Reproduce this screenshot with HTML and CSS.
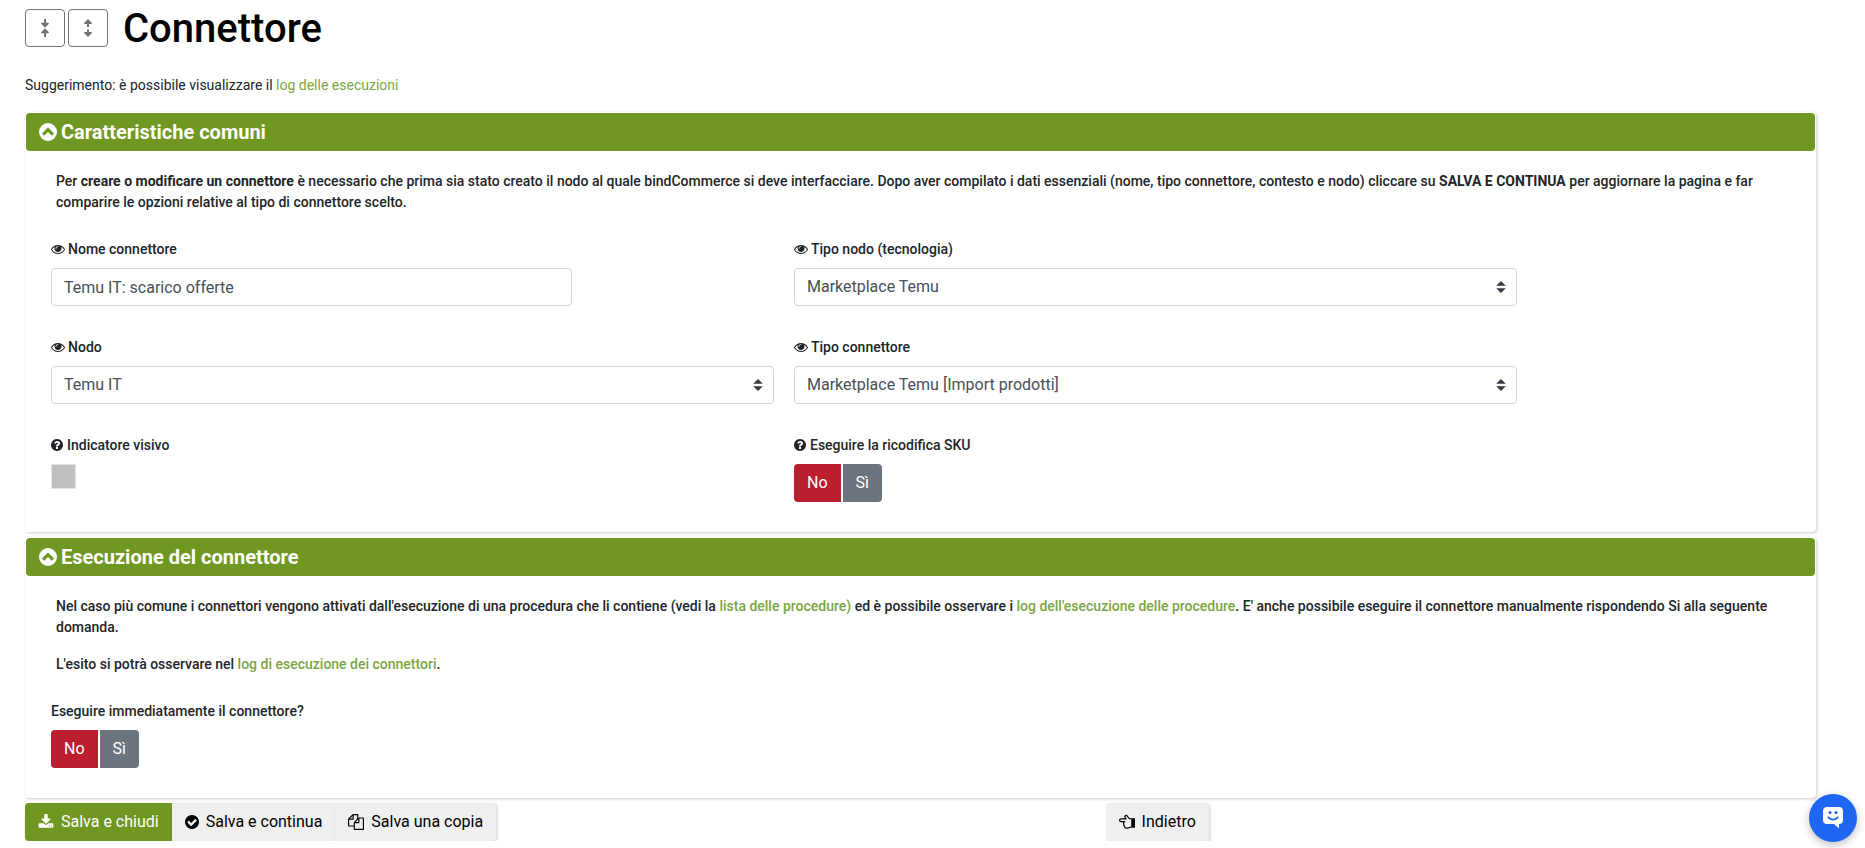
FILE: index.html
```html
<!DOCTYPE html>
<html lang="it">
<head>
  <meta charset="UTF-8">
  <meta name="viewport" content="width=device-width, initial-scale=1.0">
  <title>Connettore</title>
  <link rel="stylesheet" href="styles.css">
</head>
<body>

  <!-- Icone riutilizzate nella pagina -->
  <svg class="sprite" aria-hidden="true">
    <symbol id="eye" viewBox="0 0 1792 1792"><path d="M1664 960q-152-236-381-353 61 104 61 225 0 185-131.5 316.5t-316.5 131.5-316.5-131.5-131.5-316.5q0-121 61-225-229 117-381 353 133 205 333.5 326.5t434.5 121.5 434.5-121.5 333.5-326.5zm-720-384q0-20-14-34t-34-14q-125 0-214.5 89.5t-89.5 214.5q0 20 14 34t34 14 34-14 14-34q0-86 61-147t147-61q20 0 34-14t14-34zm848 384q0 34-20 69-140 230-376.5 368.5t-499.5 138.5-499.5-139-376.5-368q-20-35-20-69t20-69q140-229 376.5-368t499.5-139 499.5 139 376.5 368q20 35 20 69z"/></symbol>
    <symbol id="question" viewBox="128 128 1536 1536"><path d="M1024 1376v-192q0-14-9-23t-23-9h-192q-14 0-23 9t-9 23v192q0 14 9 23t23 9h192q14 0 23-9t9-23zm256-672q0-88-55.5-163t-138.5-116-170-41q-243 0-371 213-15 24 8 42l132 100q7 6 19 6 16 0 25-12 53-68 86-92 34-24 86-24 48 0 85.5 26t37.5 59q0 38-20 61t-68 45q-63 28-115.5 86.5t-52.5 125.5v36q0 14 9 23t23 9h192q14 0 23-9t9-23q0-19 21.5-49.5t54.5-49.5q32-18 49-28.5t46-35 44.5-48 28-60.5 12.5-81zm384 192q0 209-103 385.5t-279.5 279.5-385.5 103-385.5-103-279.5-279.5-103-385.5 103-385.5 279.5-279.5 385.5-103 385.5 103 279.5 279.5 103 385.5z"/></symbol>
    <symbol id="chevron-up" viewBox="0 0 18 18"><path fill-rule="evenodd" d="M9 0a9 9 0 1 1 0 18a9 9 0 0 1 0-18zM9.6 4.9a.8.8 0 0 0-1.200 0L3.400 9.900a.8.8 0 0 0 0 1.100l1.200 1.200a.8.8 0 0 0 1.100 0L9 8.900l3.300 3.300a.8.8 0 0 0 1.100 0l1.200-1.200a.8.8 0 0 0 0-1.100z"/></symbol>
    <symbol id="download" viewBox="0 0 1792 1792"><path d="M1344 1344q0-26-19-45t-45-19-45 19-19 45 19 45 45 19 45-19 19-45zm256 0q0-26-19-45t-45-19-45 19-19 45 19 45 45 19 45-19 19-45zm128-224v320q0 40-28 68t-68 28h-1472q-40 0-68-28t-28-68v-320q0-40 28-68t68-28h465l135 136q58 56 136 56t136-56l136-136h464q40 0 68 28t28 68zm-325-569q17 41-14 70l-448 448q-18 19-45 19t-45-19l-448-448q-31-29-14-70 17-39 59-39h256v-448q0-26 19-45t45-19h256q26 0 45 19t19 45v448h256q42 0 59 39z"/></symbol>
    <symbol id="check" viewBox="128 128 1536 1536"><path d="M1412 734q0-28-18-46l-91-90q-19-19-45-19t-45 19l-408 407-226-226q-19-19-45-19t-45 19l-91 90q-18 18-18 46 0 27 18 45l362 362q19 19 45 19 27 0 46-19l543-543q18-18 18-45zm252 162q0 209-103 385.5t-279.5 279.5-385.5 103-385.5-103-279.5-279.5-103-385.5 103-385.5 279.5-279.5 385.5-103 385.5 103 279.5 279.5 103 385.5z"/></symbol>
    <symbol id="copy" viewBox="0 0 1792 1792"><path d="M1696 384q40 0 68 28t28 68v1216q0 40-28 68t-68 28h-960q-40 0-68-28t-28-68v-288h-544q-40 0-68-28t-28-68v-672q0-40 20-88t48-76l408-408q28-28 76-48t88-20h416q40 0 68 28t28 68v328q68-40 128-40h416zm-544 213l-299 299h299v-299zm-640-384l-299 299h299v-299zm196 647l316-316v-416h-384v416q0 40-28 68t-68 28h-416v640h512v-256q0-40 20-88t48-76zm956 804v-1152h-384v416q0 40-28 68t-68 28h-416v640h896z"/></symbol>
    <symbol id="hand-left" viewBox="0 0 16 16"><path fill="none" stroke="currentColor" stroke-width="1.200" stroke-linejoin="round" d="M12 4.800C10.200 4.800 9.200 3.600 8.300 2.200C7.400.9 5.400 1.500 5.900 3.100C6.100 3.900 6.700 4.400 7 4.900H2A1.300 1.300 0 0 0 2 7.700H5C4.300 8.500 4.300 9.500 5 10.100C4.600 10.900 4.800 11.800 5.500 12.200C5.400 13.500 6.200 14.200 7.500 14.200C9.200 14.200 10.200 13.200 12 13.200M5 7.700H6.200"/><path d="M12.200 4.200h3.200q.6 0 .6.600v8.400q0 .6-.6.600h-3.200z"/></symbol>
  </svg>

  <main class="page">

    <header class="title-bar">
      <button type="button" class="btn-outline" aria-label="Comprimi tutto">
        <svg width="8" height="18" viewBox="0 0 8 18"><path d="M3 0h2v3.800h2.800v1L4 8.800.2 4.800v-1H3zM3 18h2v-3.800h2.800v-1L4 9.200.2 13.200v1H3z"/></svg>
      </button>
      <button type="button" class="btn-outline" aria-label="Espandi tutto">
        <svg width="8" height="18" viewBox="0 0 8 18"><path d="M3 8h2V5h2.800V4L4 0 .2 4v1H3zM3 10.500h2V13h2.800v1L4 18 .2 14v-1H3z"/></svg>
      </button>
      <h1>Connettore</h1>
    </header>

    <p class="hint">Suggerimento: è possibile visualizzare il <a href="#">log delle esecuzioni</a></p>

    <form>
      <!-- Caratteristiche comuni -->
      <section class="panel">
        <h2 class="panel-title"><svg class="icon-title"><use href="#chevron-up"/></svg>Caratteristiche comuni</h2>
        <div class="panel-body">
          <div class="info">
            <p>Per <b>creare o modificare un connettore</b> è necessario che prima sia stato creato il nodo al quale bindCommerce si deve interfacciare. Dopo aver compilato i dati essenziali (nome, tipo connettore, contesto e nodo) cliccare su <b>SALVA E CONTINUA</b> per aggiornare la pagina e far comparire le opzioni relative al tipo di connettore scelto.</p>
          </div>
          <div class="fields">
            <div class="field">
              <label for="nome"><svg class="icon-eye"><use href="#eye"/></svg>Nome connettore</label>
              <input type="text" id="nome" class="control control-short" value="Temu IT: scarico offerte">
            </div>
            <div class="field">
              <label for="tipo-nodo"><svg class="icon-eye"><use href="#eye"/></svg>Tipo nodo (tecnologia)</label>
              <select id="tipo-nodo" class="control"><option>Marketplace Temu</option></select>
            </div>
            <div class="field">
              <label for="nodo"><svg class="icon-eye"><use href="#eye"/></svg>Nodo</label>
              <select id="nodo" class="control"><option>Temu IT</option></select>
            </div>
            <div class="field">
              <label for="tipo-connettore"><svg class="icon-eye"><use href="#eye"/></svg>Tipo connettore</label>
              <select id="tipo-connettore" class="control"><option>Marketplace Temu [Import prodotti]</option></select>
            </div>
            <div class="field">
              <label for="indicatore"><svg class="icon-help"><use href="#question"/></svg>Indicatore visivo</label>
              <button type="button" id="indicatore" class="swatch"></button>
            </div>
            <div class="field">
              <span class="label" id="ricodifica"><svg class="icon-help"><use href="#question"/></svg>Eseguire la ricodifica SKU</span>
              <div class="toggle" role="group" aria-labelledby="ricodifica">
                <button type="button" class="btn btn-no">No</button>
                <button type="button" class="btn btn-si">Sì</button>
              </div>
            </div>
          </div>
        </div>
      </section>

      <!-- Esecuzione del connettore -->
      <section class="panel">
        <h2 class="panel-title"><svg class="icon-title"><use href="#chevron-up"/></svg>Esecuzione del connettore</h2>
        <div class="panel-body">
          <div class="info">
            <p>Nel caso più comune i connettori vengono attivati dall'esecuzione di una procedura che li contiene (vedi la <a href="#">lista delle procedure)</a> ed è possibile osservare i <a href="#">log dell'esecuzione delle procedure</a>. E' anche possibile eseguire il connettore manualmente rispondendo Si alla seguente domanda.</p>
            <p>L'esito si potrà osservare nel <a href="#">log di esecuzione dei connettori</a>.</p>
          </div>
          <div class="field">
            <span class="label" id="esegui">Eseguire immediatamente il connettore?</span>
            <div class="toggle" role="group" aria-labelledby="esegui">
              <button type="button" class="btn btn-no">No</button>
              <button type="button" class="btn btn-si">Sì</button>
            </div>
          </div>
        </div>
      </section>

      <!-- Azioni -->
      <div class="actions">
        <div class="actions-save">
          <button type="submit" class="btn btn-action btn-primary"><svg class="icon"><use href="#download"/></svg>Salva e chiudi</button>
          <button type="submit" class="btn btn-action"><svg class="icon icon-check"><use href="#check"/></svg>Salva e continua</button>
          <button type="submit" class="btn btn-action"><svg class="icon"><use href="#copy"/></svg>Salva una copia</button>
        </div>
        <button type="button" class="btn btn-action btn-back"><svg class="icon"><use href="#hand-left"/></svg>Indietro</button>
      </div>
    </form>
  </main>

  <button type="button" class="chat" aria-label="Chat">
    <svg width="20" height="22" viewBox="0 0 20 22"><path fill="#fff" d="M4 0h12a4 4 0 0 1 4 4v9a4 4 0 0 1-4 4v4.500L11 17H4a4 4 0 0 1-4-4V4a4 4 0 0 1 4-4z"/><circle cx="7" cy="5.500" r="1.600"/><circle cx="13" cy="5.500" r="1.600"/><path d="M5.300 10.300Q10 15 14.700 10.300" fill="none" stroke="#1f66f2" stroke-width="1.800" stroke-linecap="round"/></svg>
  </button>

</body>
</html>
```
FILE: styles.css
```css
* {
  box-sizing: border-box;
}
body {
  margin: 0;
  background-color: #fff;
  color: #212529;
  font-family: Roboto, "Liberation Sans", sans-serif;
  font-size: 14px;
  line-height: 21px;
}
a {
  color: #7ba644;
  text-decoration: none;
}
p {
  margin: 0;
}
button,
input,
select {
  font-family: inherit;
}
svg {
  fill: currentColor;
}
.sprite {
  display: none;
}
.page {
  padding: 5px 49px 0 25px;
}

/* Titolo */
.title-bar {
  display: flex;
  align-items: flex-start;
  gap: 3px;
}
.title-bar h1 {
  margin: 0 0 0 12px;
  color: #000;
  font-size: 40px;
  font-weight: 500;
  line-height: 48px;
}
.btn-outline {
  display: flex;
  align-items: center;
  justify-content: center;
  width: 40px;
  height: 38px;
  margin-top: 4px;
  padding: 0;
  background-color: #fff;
  border: 1px solid #6c757d;
  border-radius: 4px;
  color: #6c757d;
}
.hint {
  margin: 22px 0 16px;
}

/* Pannelli */
.panel {
  margin-bottom: 5px;
  padding: 1px;
  border-radius: 4px;
  box-shadow: 1px 1px 3px rgba(0, 0, 0, 0.2);
}
.panel-title {
  display: flex;
  align-items: center;
  gap: 4px;
  margin: 0;
  padding: 7px 13px;
  background-color: #709722;
  border-radius: 4px;
  color: #fff;
  font-size: 20px;
  font-weight: 700;
  line-height: 24px;
}
.icon-title {
  width: 18px;
  height: 18px;
}
.panel-body {
  padding: 20px 25px 29px;
}
.info {
  display: grid;
  gap: 16px;
  padding: 0 5px;
  margin-bottom: 25px;
  font-weight: 500;
}
.info b {
  font-weight: 700;
}
.fields {
  display: grid;
  grid-template-columns: 20fr 20fr 7fr;
  gap: 30px 20px;
}
.field:nth-child(odd) {
  grid-column: 1;
}
.field label,
.field .label {
  display: flex;
  align-items: center;
  margin-bottom: 8px;
  font-weight: 500;
  line-height: 22px;
}
.icon-eye {
  width: 14px;
  height: 14px;
  margin-right: 3px;
}
.icon-help {
  width: 12px;
  height: 12px;
  margin-right: 4px;
}
.control {
  display: block;
  width: 100%;
  height: 38px;
  padding: 6px 12px;
  background-color: #fff;
  border: 1px solid #ced4da;
  border-radius: 4px;
  color: #495057;
  font-size: 16px;
  line-height: 24px;
}
.control-short {
  width: 72%;
}
select.control {
  appearance: none;
  background: #fff url("data:image/svg+xml,%3csvg xmlns='http://www.w3.org/2000/svg' viewBox='0 0 4 5'%3e%3cpath fill='%23343a40' d='M2 0L0 2h4zm0 5L0 3h4z'/%3e%3c/svg%3e") no-repeat right 10px center / 10px 12px;
}
.swatch {
  display: block;
  width: 25px;
  height: 25px;
  padding: 0;
  background-color: #bfbfbf;
  border: 1px solid #e3e3e3;
}

/* Pulsanti */
.btn {
  height: 38px;
  padding: 0 13px;
  border: none;
  border-radius: 4px;
  font-size: 16px;
  line-height: 24px;
}
.toggle {
  display: flex;
  gap: 2px;
}
.btn-no {
  background-color: #bb1f2e;
  border-radius: 4px 0 0 4px;
  color: #fff;
}
.btn-si {
  background-color: #6c757d;
  border-radius: 0 4px 4px 0;
  color: #fff;
}
.actions {
  display: flex;
  gap: 6px;
}
.actions-save {
  display: flex;
  flex: 0 0 60%;
}
.btn-action {
  display: flex;
  align-items: center;
  gap: 7px;
  background-color: #efefef;
  box-shadow: 1px 1px 3px rgba(0, 0, 0, 0.2);
  color: #000;
}
.actions-save .btn-action {
  border-radius: 0;
}
.actions-save .btn-action:first-child {
  border-radius: 4px 0 0 4px;
}
.actions-save .btn-action:last-child {
  border-radius: 0 4px 4px 0;
}
.actions .btn-primary {
  background-color: #709722;
  color: #fff;
}
.icon {
  width: 16px;
  height: 16px;
}
.icon-check {
  width: 14px;
  height: 14px;
}
.chat {
  position: fixed;
  right: 8px;
  bottom: 6px;
  display: flex;
  align-items: center;
  justify-content: center;
  width: 48px;
  height: 48px;
  padding: 0;
  background-color: #1f66f2;
  border: none;
  border-radius: 50%;
  box-shadow: 0 3px 8px rgba(0, 0, 0, 0.25);
  color: #1f66f2;
}
```
